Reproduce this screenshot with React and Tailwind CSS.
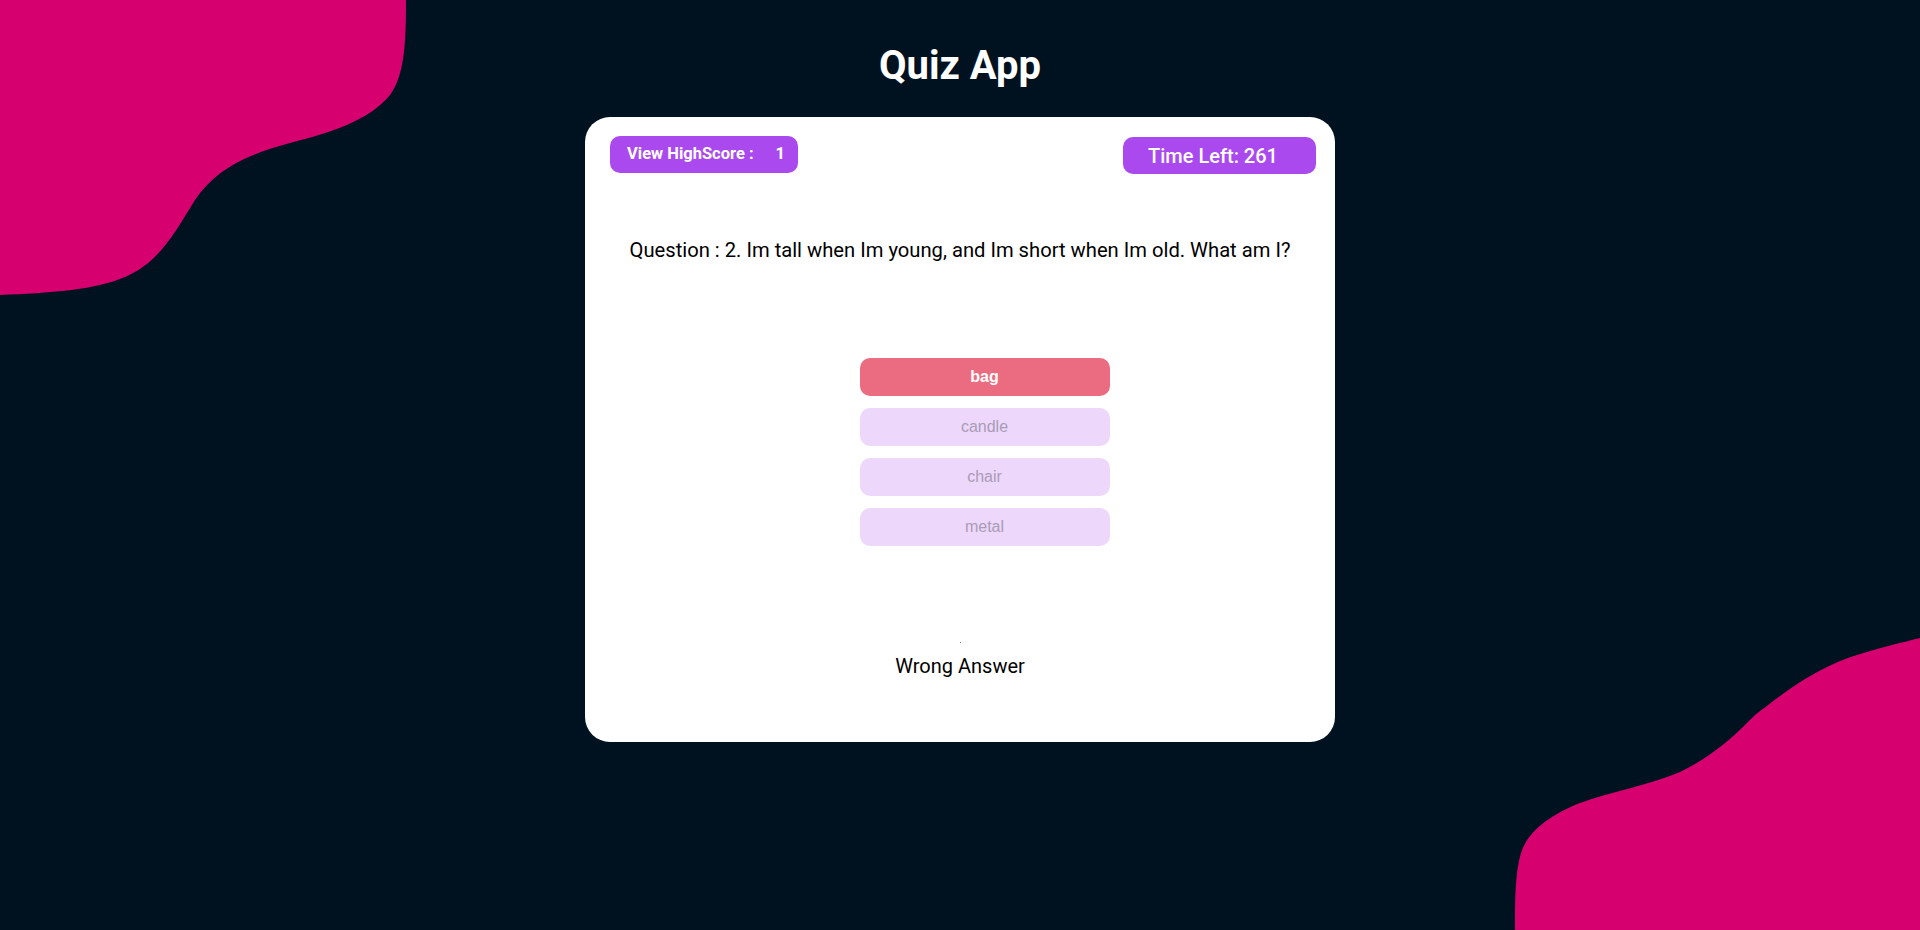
import React from "react";

export default function App() {
  return (
    <div className="relative min-h-[930px] w-full overflow-hidden bg-[#001220]" style={{ fontFamily: "Roboto, 'Liberation Sans', sans-serif" }}>
      <svg className="absolute inset-0 w-[1920px] h-[930px]" viewBox="0 0 1920 930" aria-hidden="true">
        <path
          fill="#d6006f"
          d="M0 0 H406 C406 40 405 75 390 95 C370 120 330 133 290 143 C245 155 215 170 195 200 C175 232 160 262 125 277 C95 290 50 293 0 295 Z"
        />
        <path
          fill="#d6006f"
          d="M1920 638 C1880 648 1850 655 1825 668 C1795 683 1775 700 1755 715 C1735 735 1715 755 1680 772 C1650 785 1610 792 1580 803 C1550 815 1530 830 1522 850 C1515 870 1515 900 1515 930 L1920 930 Z"
        />
      </svg>

      <div className="relative flex flex-col items-center">
        <h1 className="mt-[42px] h-[48px] text-[40px] leading-[48px] font-bold text-white">Quiz App</h1>

        <div className="mt-[27px] w-[750px] h-[625px] rounded-[25px] bg-white pt-[19px] pl-[25px] pr-[19px] flex flex-col">
          <div className="flex justify-between items-start">
            <div className="w-[188px] h-[37px] rounded-[10px] bg-[#aa4aee] flex items-center pl-[17px] text-white text-[16.5px] font-bold">
              <span>View HighScore :</span>
              <span className="ml-[22px]">1</span>
            </div>
            <div className="w-[193px] h-[37px] mt-[1px] rounded-[10px] bg-[#aa4aee] flex items-center pl-[25px] text-white text-[20px] font-medium">
              Time Left: 261
            </div>
          </div>

          <p className="mt-[64px] text-center text-[20.2px] font-normal text-black leading-[24px] pr-[6px]">
            Question : 2. Im tall when Im young, and Im short when Im old. What am I?
          </p>

          <div className="mt-[96px] flex flex-col items-center gap-[12px] pl-[43px]" style={{ fontFamily: "'Liberation Sans', Arial, sans-serif" }}>
            <button className="w-[250px] h-[38px] rounded-[10px] bg-[#eb6c80] text-white text-[16px] font-bold">bag</button>
            <button className="w-[250px] h-[38px] rounded-[10px] bg-[#edd7fb] text-[#a99cb6] text-[16px]">candle</button>
            <button className="w-[250px] h-[38px] rounded-[10px] bg-[#edd7fb] text-[#a99cb6] text-[16px]">chair</button>
            <button className="w-[250px] h-[38px] rounded-[10px] bg-[#edd7fb] text-[#a99cb6] text-[16px]">metal</button>
          </div>

          <div className="mt-[96px] flex flex-col items-center pr-[6px]">
            <span className="block w-[1px] h-[1px] bg-[#777]"></span>
            <p className="mt-[11px] text-[20px] font-normal text-black leading-[24px]">Wrong Answer</p>
          </div>
        </div>
      </div>
    </div>
  );
}
